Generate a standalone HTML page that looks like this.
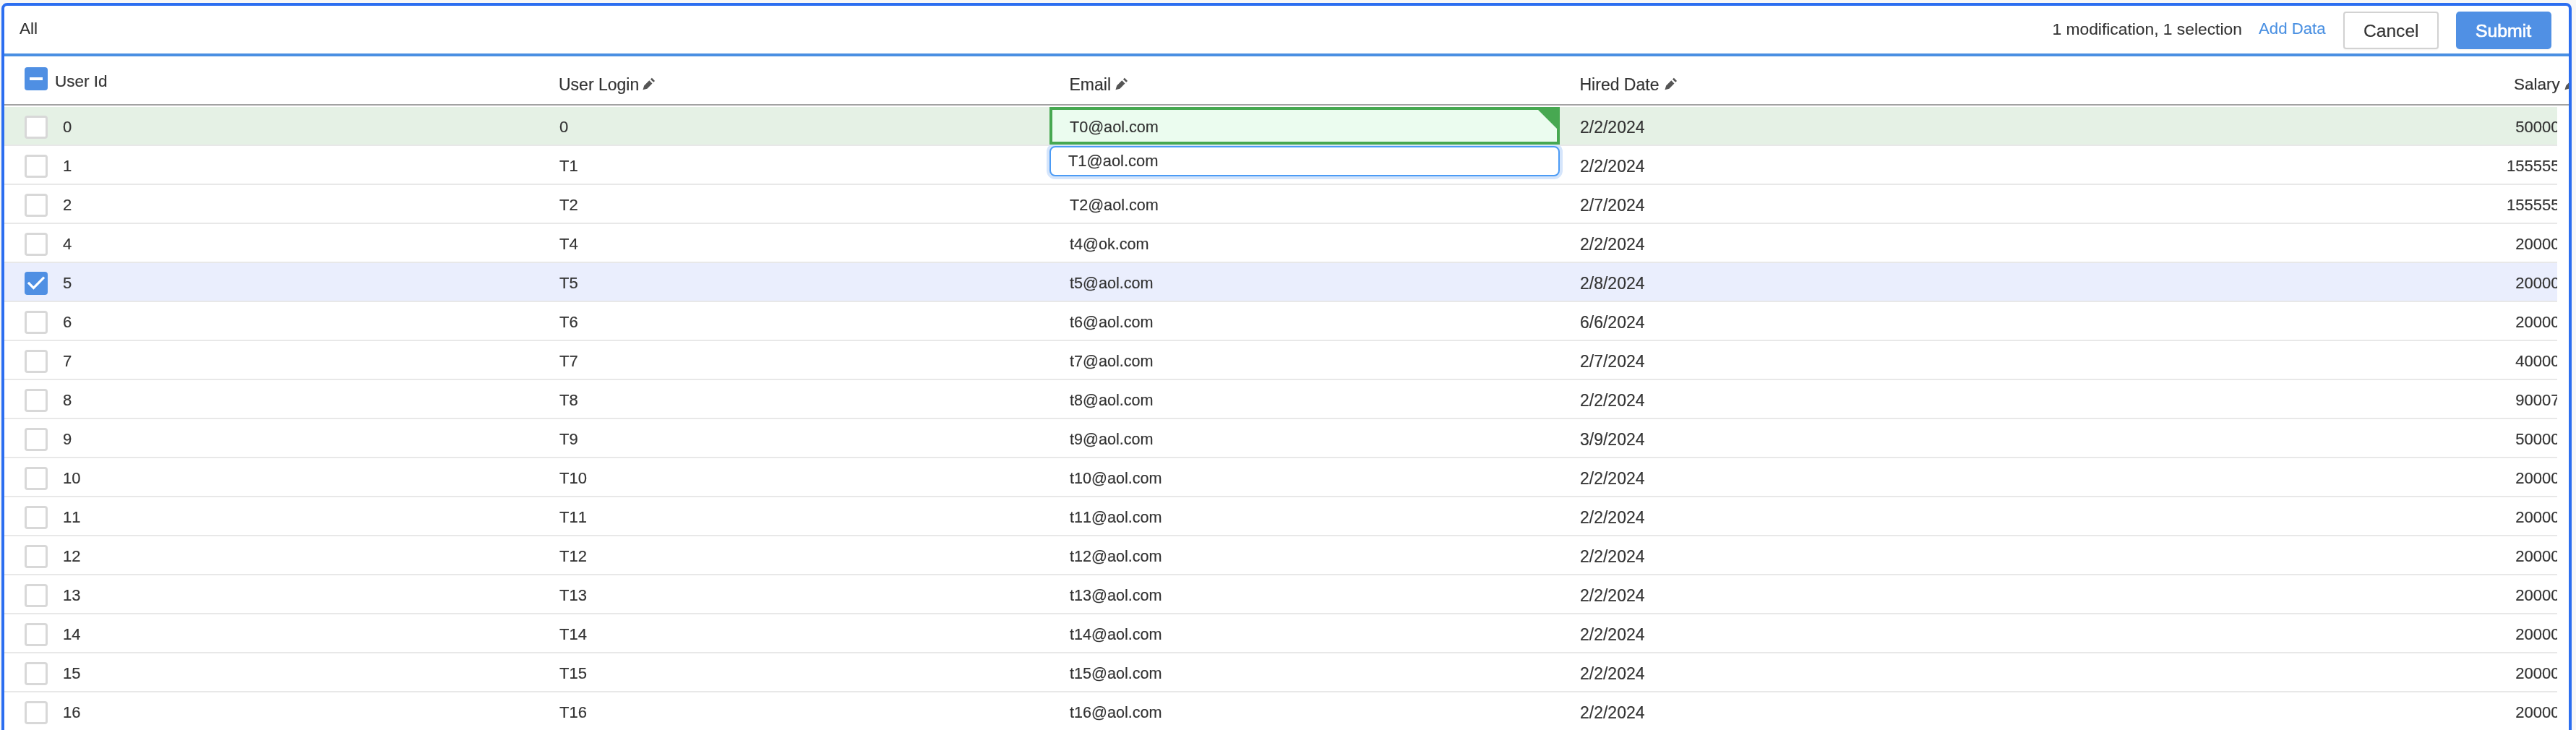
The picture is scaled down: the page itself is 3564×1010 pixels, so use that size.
<!DOCTYPE html>
<html><head><meta charset="utf-8"><style>
html,body{margin:0;padding:0}
body{will-change:transform;width:3564px;height:1010px;overflow:hidden;position:relative;background:#f7f7f7;font-family:"Liberation Sans",sans-serif;color:#333;-webkit-text-stroke:0.18px #333;font-kerning:none}
#add{-webkit-text-stroke:0.1px #4a90e2}
#frame{position:absolute;left:2px;top:4px;width:3548px;height:1200px;border:4px solid #2c6ef0;border-radius:8px;background:#fff}
.tb{position:absolute;font-size:22.6px;line-height:24px;white-space:nowrap}
#all{left:27px;top:28px;-webkit-text-stroke:0.1px #333}
#mods{left:2839.5px;top:27.5px;font-size:22.8px;-webkit-text-stroke:0.1px #333}
#add{left:3125px;top:27.5px;color:#4a90e2;font-size:22.2px}
#cancel{position:absolute;left:3242px;top:16px;width:128px;height:48px;border:2px solid #d2d2d2;border-radius:4px;background:#fff;box-shadow:0 1px 2px rgba(0,0,0,.06)}
#submit{position:absolute;left:3398px;top:16px;width:132px;height:52px;border-radius:5px;background:#5090e4;box-shadow:0 1px 1px rgba(0,0,0,.05)}
.btxt{position:absolute;font-size:24.6px;line-height:26px;white-space:nowrap}
#ctxt{left:3270px;top:29.5px;color:#333}
#stxt{left:3425px;top:29.5px;color:#fff;font-size:24.8px;-webkit-text-stroke:0.7px #fff}
#sep{position:absolute;left:6px;top:74px;width:3548px;height:4px;background:#4a8fe2}
#head{position:absolute;left:6px;top:78px;width:3548px;height:68px;overflow:hidden}
#hline{position:absolute;left:0;top:66px;width:3548px;height:2px;background:#a2a2a2}
.h{position:absolute;font-size:23px;line-height:24px;white-space:nowrap;color:#333}
#h1{left:70px;top:22.5px;font-size:22.5px}
#h2{left:767px;top:27px}
#h3{left:1473.5px;top:27px}
#h4{left:2179.5px;top:27px}
#h5{left:3472px;top:27px;font-size:22.5px}
.pen{position:absolute;width:28px;height:28px;fill:#555}
#hcb{position:absolute;left:28px;top:15px;width:32px;height:32px;border-radius:4px;background:#4f8fe3}
#hcb i{position:absolute;left:7px;top:14px;width:18px;height:4px;background:#fff}
#body{position:absolute;left:6px;top:146px;width:3532px;height:864px;overflow:hidden}
.row{position:absolute;left:0;width:3532px;height:52px;border-bottom:2px solid #e8e8e8;background:#fff}
.row.mod{background:#e5f1e5}
.row.sel{background:#eaeefd}
.cb{position:absolute;left:28px;top:12px;width:26px;height:26px;border:3px solid #d8d8d8;border-radius:4px;background:#fff}
.cb.on{border-color:#4f8fe3;background:#4f8fe3}
.cb.on svg{position:absolute;left:-3px;top:-3px;width:32px;height:32px}
.t{position:absolute;top:15.5px;font-size:22px;line-height:24px;white-space:nowrap}
.c1{left:81px}
.c2{left:768px}
.c3{left:1474px;font-size:21.6px}
.c3i{left:1472px;font-size:21.9px}
.c4{left:2180px;font-size:23px}
.c5{right:-3.5px}
.modcell{position:absolute;left:1446px;top:2px;width:698px;height:44px;border:4px solid #47a851;background:#ebfcef;overflow:hidden}
.tri{position:absolute;right:0;top:0;width:0;height:0;border-top:26px solid #47a851;border-left:26px solid transparent}
.inp{position:absolute;left:1446px;top:56px;width:702px;height:38px;border:2px solid #4c9bf5;border-radius:8px;background:#fff;box-shadow:0 0 0 4px #d5e5fb}

</style></head><body>
<div id="frame"></div>
<span class="tb" id="all">All</span>
<span class="tb" id="mods">1 modification, 1 selection</span>
<span class="tb" id="add">Add Data</span>
<div id="cancel"></div><span class="btxt" id="ctxt">Cancel</span>
<div id="submit"></div><span class="btxt" id="stxt">Submit</span>
<div id="sep"></div>
<div id="head">
<div id="hcb"><i></i></div>
<span class="h" id="h1">User Id</span>
<span class="h" id="h2">User Login</span><svg class="pen" style="left:877.3px;top:24px" viewBox="0 0 28 28"><path d="M6.45 22.35L8.15 16.45L15.27 9.33L19.47 13.53L12.35 20.65ZM16.95 7.65L18.85 5.75L23.05 9.95L21.15 11.85Z"/></svg>
<span class="h" id="h3">Email</span><svg class="pen" style="left:1531px;top:24px" viewBox="0 0 28 28"><path d="M6.45 22.35L8.15 16.45L15.27 9.33L19.47 13.53L12.35 20.65ZM16.95 7.65L18.85 5.75L23.05 9.95L21.15 11.85Z"/></svg>
<span class="h" id="h4">Hired Date</span><svg class="pen" style="left:2291px;top:24px" viewBox="0 0 28 28"><path d="M6.45 22.35L8.15 16.45L15.27 9.33L19.47 13.53L12.35 20.65ZM16.95 7.65L18.85 5.75L23.05 9.95L21.15 11.85Z"/></svg>
<span class="h" id="h5">Salary</span><svg class="pen" style="left:3536px;top:24px" viewBox="0 0 28 28"><path d="M6.45 22.35L8.15 16.45L15.27 9.33L19.47 13.53L12.35 20.65ZM16.95 7.65L18.85 5.75L23.05 9.95L21.15 11.85Z"/></svg>
<div id="hline"></div>
</div>
<div id="body">
<div class="row mod" style="top:2px"><div class="cb"></div><span class="t c1">0</span><span class="t c2">0</span><span class="t c4">2/2/2024</span><span class="t c5">50000</span></div>
<div class="row" style="top:56px"><div class="cb"></div><span class="t c1">1</span><span class="t c2">T1</span><span class="t c4">2/2/2024</span><span class="t c5">155555</span></div>
<div class="row" style="top:110px"><div class="cb"></div><span class="t c1">2</span><span class="t c2">T2</span><span class="t c3">T2@aol.com</span><span class="t c4">2/7/2024</span><span class="t c5">155555</span></div>
<div class="row" style="top:164px"><div class="cb"></div><span class="t c1">4</span><span class="t c2">T4</span><span class="t c3">t4@ok.com</span><span class="t c4">2/2/2024</span><span class="t c5">20000</span></div>
<div class="row sel" style="top:218px"><div class="cb on"><svg viewBox="0 0 32 32"><path d="M5 14.9L12.4 22.3L27 7.7" fill="none" stroke="#fff" stroke-width="3.3"/></svg></div><span class="t c1">5</span><span class="t c2">T5</span><span class="t c3">t5@aol.com</span><span class="t c4">2/8/2024</span><span class="t c5">20000</span></div>
<div class="row" style="top:272px"><div class="cb"></div><span class="t c1">6</span><span class="t c2">T6</span><span class="t c3">t6@aol.com</span><span class="t c4">6/6/2024</span><span class="t c5">20000</span></div>
<div class="row" style="top:326px"><div class="cb"></div><span class="t c1">7</span><span class="t c2">T7</span><span class="t c3">t7@aol.com</span><span class="t c4">2/7/2024</span><span class="t c5">40000</span></div>
<div class="row" style="top:380px"><div class="cb"></div><span class="t c1">8</span><span class="t c2">T8</span><span class="t c3">t8@aol.com</span><span class="t c4">2/2/2024</span><span class="t c5">90007</span></div>
<div class="row" style="top:434px"><div class="cb"></div><span class="t c1">9</span><span class="t c2">T9</span><span class="t c3">t9@aol.com</span><span class="t c4">3/9/2024</span><span class="t c5">50000</span></div>
<div class="row" style="top:488px"><div class="cb"></div><span class="t c1">10</span><span class="t c2">T10</span><span class="t c3">t10@aol.com</span><span class="t c4">2/2/2024</span><span class="t c5">20000</span></div>
<div class="row" style="top:542px"><div class="cb"></div><span class="t c1">11</span><span class="t c2">T11</span><span class="t c3">t11@aol.com</span><span class="t c4">2/2/2024</span><span class="t c5">20000</span></div>
<div class="row" style="top:596px"><div class="cb"></div><span class="t c1">12</span><span class="t c2">T12</span><span class="t c3">t12@aol.com</span><span class="t c4">2/2/2024</span><span class="t c5">20000</span></div>
<div class="row" style="top:650px"><div class="cb"></div><span class="t c1">13</span><span class="t c2">T13</span><span class="t c3">t13@aol.com</span><span class="t c4">2/2/2024</span><span class="t c5">20000</span></div>
<div class="row" style="top:704px"><div class="cb"></div><span class="t c1">14</span><span class="t c2">T14</span><span class="t c3">t14@aol.com</span><span class="t c4">2/2/2024</span><span class="t c5">20000</span></div>
<div class="row" style="top:758px"><div class="cb"></div><span class="t c1">15</span><span class="t c2">T15</span><span class="t c3">t15@aol.com</span><span class="t c4">2/2/2024</span><span class="t c5">20000</span></div>
<div class="row" style="top:812px"><div class="cb"></div><span class="t c1">16</span><span class="t c2">T16</span><span class="t c3">t16@aol.com</span><span class="t c4">2/2/2024</span><span class="t c5">20000</span></div>
<div class="inp"></div><span class="t c3i" style="top:65px">T1@aol.com</span>
<div class="modcell"><div class="tri"></div></div><span class="t c3" style="top:17.5px">T0@aol.com</span>
</div>
</body></html>
